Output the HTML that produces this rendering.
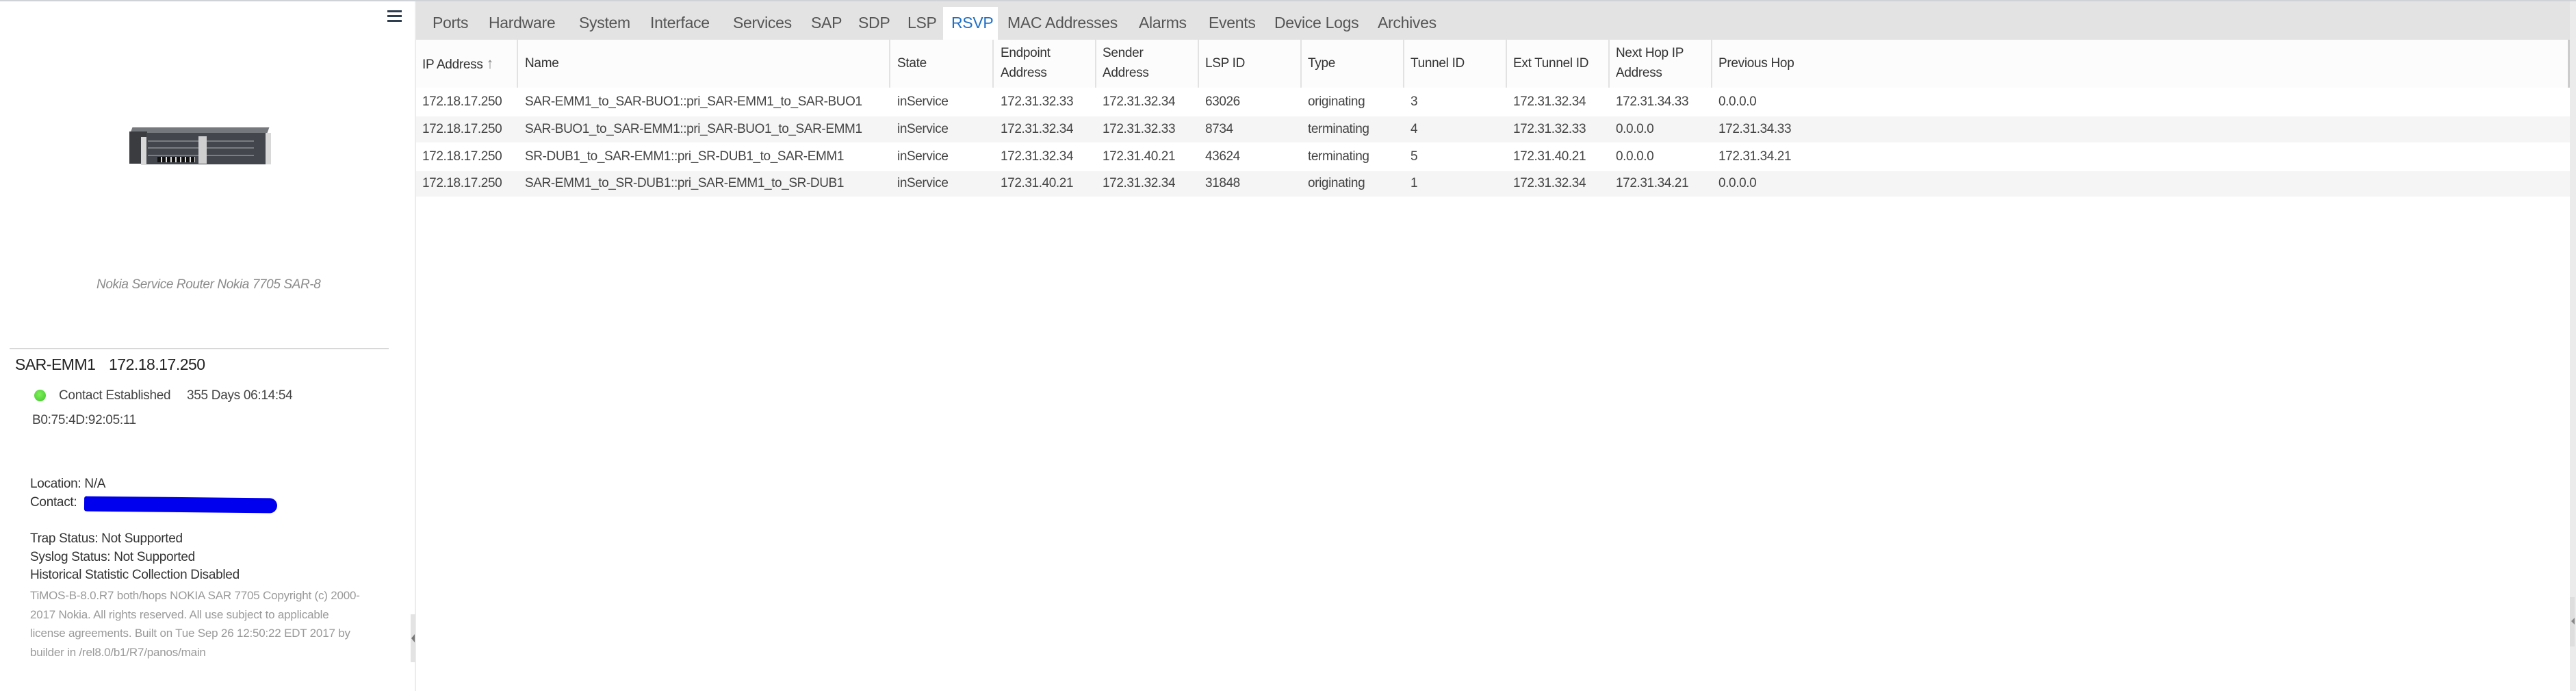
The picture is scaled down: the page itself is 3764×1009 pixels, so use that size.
<!DOCTYPE html>
<html><head><meta charset="utf-8"><style>
*{margin:0;padding:0;box-sizing:border-box}
body{width:3764px;height:1009px;position:relative;overflow:hidden;background:#fff;font-family:"Liberation Sans",sans-serif;color:#333}
.a{position:absolute;white-space:nowrap}
.tab{position:absolute;top:20px;font-size:23px;color:#555;letter-spacing:-0.3px}
.th{position:absolute;font-size:19px;color:#333;line-height:29px;letter-spacing:-0.3px}
.sep{position:absolute;top:58px;width:2px;height:70px;background:#e2e2e2}
.row{position:absolute;left:608px;width:3147px;height:40px;font-size:19px;color:#444;letter-spacing:-0.4px}
.row span{position:absolute;top:10px;white-space:nowrap}
</style></head><body>
<div class="a" style="left:0;top:0;width:3764px;height:2px;background:#cfd3d8"></div>
<!-- left panel -->
<div class="a" style="left:606px;top:2px;width:2px;height:1007px;background:#ececec"></div>
<div class="a" style="left:566px;top:15px;width:21px;height:3px;background:#2e3d4f"></div>
<div class="a" style="left:566px;top:22px;width:21px;height:3px;background:#2e3d4f"></div>
<div class="a" style="left:566px;top:29px;width:21px;height:3px;background:#2e3d4f"></div>
<!-- router -->
<div class="a" style="left:192px;top:186px;width:200px;height:8px;background:#75787c;transform:skewX(-20deg)"></div>
<div class="a" style="left:189px;top:192px;width:26px;height:47px;background:#3a3c40"></div>
<div class="a" style="left:206px;top:200px;width:8px;height:41px;background:#d8d8d8"></div>
<div class="a" style="left:214px;top:194px;width:174px;height:46px;background:#43474d"></div>
<div class="a" style="left:216px;top:205px;width:155px;height:2px;background:#7a7d82"></div>
<div class="a" style="left:216px;top:215px;width:155px;height:2px;background:#7a7d82"></div>
<div class="a" style="left:216px;top:226px;width:155px;height:2px;background:#7a7d82"></div>
<div class="a" style="left:230px;top:229px;width:55px;height:8px;background:repeating-linear-gradient(90deg,#111 0 5px,#ddd 5px 7px)"></div>
<div class="a" style="left:290px;top:199px;width:12px;height:40px;background:#cfcfcf"></div>
<div class="a" style="left:388px;top:194px;width:8px;height:46px;background:#d8d8d8"></div>
<div class="a" style="left:141px;top:405px;font-size:19px;font-style:italic;color:#8a8a8a;letter-spacing:-0.4px">Nokia Service Router Nokia 7705 SAR-8</div>
<div class="a" style="left:14px;top:508px;width:554px;height:2px;background:#d8d8d8"></div>
<div class="a" style="left:22px;top:519px;font-size:23px;color:#222;letter-spacing:-0.5px">SAR-EMM1</div>
<div class="a" style="left:159px;top:519px;font-size:23px;color:#222;letter-spacing:-0.5px">172.18.17.250</div>
<div class="a" style="left:50px;top:569px;width:17px;height:17px;border-radius:50%;background:radial-gradient(circle at 45% 40%,#7ef05a,#3fc42a)"></div>
<div class="a" style="left:86px;top:567px;font-size:19px;color:#444;letter-spacing:-0.3px">Contact Established</div>
<div class="a" style="left:273px;top:567px;font-size:19px;color:#444;letter-spacing:-0.3px">355 Days 06:14:54</div>
<div class="a" style="left:47px;top:603px;font-size:19px;color:#444;letter-spacing:-0.3px">B0:75:4D:92:05:11</div>
<div class="a" style="left:44px;top:696px;font-size:19px;color:#333;letter-spacing:-0.3px">Location: N/A</div>
<div class="a" style="left:44px;top:723px;font-size:19px;color:#333;letter-spacing:-0.3px">Contact:</div>
<div class="a" style="left:123px;top:726px;width:282px;height:22px;background:#0000ee;border-radius:4px 14px 14px 4px;transform:rotate(0.6deg)"></div>
<div class="a" style="left:44px;top:776px;font-size:19px;color:#333;letter-spacing:-0.3px">Trap Status: Not Supported</div>
<div class="a" style="left:44px;top:803px;font-size:19px;color:#333;letter-spacing:-0.3px">Syslog Status: Not Supported</div>
<div class="a" style="left:44px;top:829px;font-size:19px;color:#333;letter-spacing:-0.3px">Historical Statistic Collection Disabled</div>
<div class="a" style="left:44px;top:856px;font-size:17px;line-height:27.5px;color:#999;letter-spacing:-0.2px">TiMOS-B-8.0.R7 both/hops NOKIA SAR 7705 Copyright (c) 2000-<br>2017 Nokia. All rights reserved. All use subject to applicable<br>license agreements. Built on Tue Sep 26 12:50:22 EDT 2017 by<br>builder in /rel8.0/b1/R7/panos/main</div>
<div class="a" style="left:600px;top:897px;width:7px;height:70px;background:#e3e3e3"></div>
<div class="a" style="left:601px;top:926px;width:0;height:0;border-top:6px solid transparent;border-bottom:6px solid transparent;border-right:5px solid #777"></div>
<!-- tabs -->
<div class="a" style="left:608px;top:2px;width:3147px;height:56px;background:#e3e3e3"></div>
<div class="a" style="left:1378px;top:10px;width:80px;height:48px;background:#fff"></div>
<div class="tab" style="left:632px">Ports</div>
<div class="tab" style="left:714px">Hardware</div>
<div class="tab" style="left:846px">System</div>
<div class="tab" style="left:950px">Interface</div>
<div class="tab" style="left:1071px">Services</div>
<div class="tab" style="left:1185px">SAP</div>
<div class="tab" style="left:1254px">SDP</div>
<div class="tab" style="left:1326px">LSP</div>
<div class="tab" style="left:1390px;color:#1f6fc6">RSVP</div>
<div class="tab" style="left:1472px">MAC Addresses</div>
<div class="tab" style="left:1664px">Alarms</div>
<div class="tab" style="left:1766px">Events</div>
<div class="tab" style="left:1862px">Device Logs</div>
<div class="tab" style="left:2013px">Archives</div>
<!-- header -->
<div class="a" style="left:608px;top:58px;width:3147px;height:70px;background:#fcfcfc"></div>
<div class="a" style="left:3752px;top:58px;width:3px;height:70px;background:#ccc"></div>
<div class="sep" style="left:755px"></div><div class="sep" style="left:1299px"></div><div class="sep" style="left:1450px"></div><div class="sep" style="left:1600px"></div><div class="sep" style="left:1750px"></div><div class="sep" style="left:1900px"></div><div class="sep" style="left:2050px"></div><div class="sep" style="left:2200px"></div><div class="sep" style="left:2350px"></div><div class="sep" style="left:2500px"></div>
<div class="th" style="left:617px;top:78px">IP Address <span style="color:#888;font-size:22px">&#8593;</span></div>
<div class="th" style="left:767px;top:78px">Name</div>
<div class="th" style="left:1311px;top:78px">State</div>
<div class="th" style="left:1462px;top:63px">Endpoint<br>Address</div>
<div class="th" style="left:1611px;top:63px">Sender<br>Address</div>
<div class="th" style="left:1761px;top:78px">LSP ID</div>
<div class="th" style="left:1911px;top:78px">Type</div>
<div class="th" style="left:2061px;top:78px">Tunnel ID</div>
<div class="th" style="left:2211px;top:78px">Ext Tunnel ID</div>
<div class="th" style="left:2361px;top:63px">Next Hop IP<br>Address</div>
<div class="th" style="left:2511px;top:78px">Previous Hop</div>
<!-- rows -->
<div class="row" style="top:128px;height:42px;background:#fff"><span style="left:9px">172.18.17.250</span><span style="left:159px">SAR-EMM1_to_SAR-BUO1::pri_SAR-EMM1_to_SAR-BUO1</span><span style="left:703px">inService</span><span style="left:854px">172.31.32.33</span><span style="left:1003px">172.31.32.34</span><span style="left:1153px">63026</span><span style="left:1303px">originating</span><span style="left:1453px">3</span><span style="left:1603px">172.31.32.34</span><span style="left:1753px">172.31.34.33</span><span style="left:1903px">0.0.0.0</span></div>
<div class="row" style="top:170px;height:38px;background:#f5f5f5"><span style="left:9px;top:8px">172.18.17.250</span><span style="left:159px;top:8px">SAR-BUO1_to_SAR-EMM1::pri_SAR-BUO1_to_SAR-EMM1</span><span style="left:703px;top:8px">inService</span><span style="left:854px;top:8px">172.31.32.34</span><span style="left:1003px;top:8px">172.31.32.33</span><span style="left:1153px;top:8px">8734</span><span style="left:1303px;top:8px">terminating</span><span style="left:1453px;top:8px">4</span><span style="left:1603px;top:8px">172.31.32.33</span><span style="left:1753px;top:8px">0.0.0.0</span><span style="left:1903px;top:8px">172.31.34.33</span></div>
<div class="row" style="top:208px;height:42px;background:#fff"><span style="left:9px">172.18.17.250</span><span style="left:159px">SR-DUB1_to_SAR-EMM1::pri_SR-DUB1_to_SAR-EMM1</span><span style="left:703px">inService</span><span style="left:854px">172.31.32.34</span><span style="left:1003px">172.31.40.21</span><span style="left:1153px">43624</span><span style="left:1303px">terminating</span><span style="left:1453px">5</span><span style="left:1603px">172.31.40.21</span><span style="left:1753px">0.0.0.0</span><span style="left:1903px">172.31.34.21</span></div>
<div class="row" style="top:250px;height:37px;background:#f5f5f5"><span style="left:9px;top:7px">172.18.17.250</span><span style="left:159px;top:7px">SAR-EMM1_to_SR-DUB1::pri_SAR-EMM1_to_SR-DUB1</span><span style="left:703px;top:7px">inService</span><span style="left:854px;top:7px">172.31.40.21</span><span style="left:1003px;top:7px">172.31.32.34</span><span style="left:1153px;top:7px">31848</span><span style="left:1303px;top:7px">originating</span><span style="left:1453px;top:7px">1</span><span style="left:1603px;top:7px">172.31.32.34</span><span style="left:1753px;top:7px">172.31.34.21</span><span style="left:1903px;top:7px">0.0.0.0</span></div>
<!-- right strip -->
<div class="a" style="left:3755px;top:2px;width:9px;height:1007px;background:#ebebeb"></div>
<div class="a" style="left:3755px;top:872px;width:7px;height:72px;background:#dedede"></div>
<div class="a" style="left:3757px;top:902px;width:0;height:0;border-top:5px solid transparent;border-bottom:5px solid transparent;border-right:5px solid #888"></div>
</body></html>
